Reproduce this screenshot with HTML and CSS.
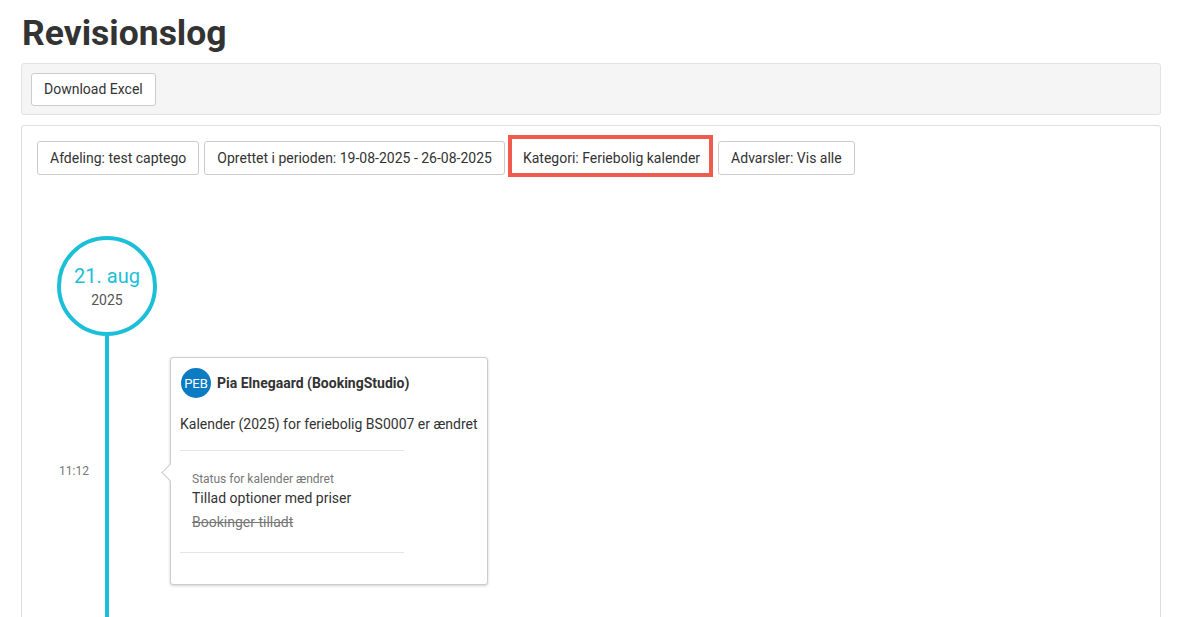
FILE: index.html
```html
<!DOCTYPE html>
<html lang="da">
  <head>
    <meta charset="UTF-8" />
    <meta name="viewport" content="width=device-width, initial-scale=1.0" />
    <title>Revisionslog</title>
    <link rel="stylesheet" href="styles.css">
  </head>

  <body>
    <div class="page">
      <h1>Revisionslog</h1>

      <div class="toolbar">
        <button class="btn">Download Excel</button>
      </div>

      <div class="panel">
        <div class="filters">
          <button class="btn">Afdeling: test captego</button>
          <button class="btn">Oprettet i perioden: 19-08-2025 - 26-08-2025</button>
          <button class="btn highlight">Kategori: Feriebolig kalender</button>
          <button class="btn">Advarsler: Vis alle</button>
        </div>

        <div class="timeline">
          <div class="day">
            <span class="day-date">21. aug</span>
            <span class="day-year">2025</span>
          </div>

          <div class="entry">
            <div class="entry-time">11:12</div>
            <div class="rail"></div>
            <div class="card">
              <div class="card-head">
                <span class="avatar">PEB</span>
                <span class="author">Pia Elnegaard (BookingStudio)</span>
              </div>
              <p class="message">Kalender (2025) for feriebolig BS0007 er ændret</p>
              <div class="change">
                <span class="change-label">Status for kalender ændret</span>
                <span class="change-new">Tillad optioner med priser</span>
                <span class="change-old">Bookinger tilladt</span>
              </div>
            </div>
          </div>
        </div>
      </div>
    </div>
  </body>
</html>
```

FILE: styles.css
```css
* {
  margin: 0;
  padding: 0;
  box-sizing: border-box;
}
:root {
  --text: #333;
  --muted: #777;
  --line: #e5e5e5;
  --accent: #1bbfd8;
  --avatar: #0b7bc4;
  --mark: #ef5b4f;
}
body {
  font-family: Roboto, "Liberation Sans", sans-serif;
  color: var(--text);
  background-color: #fff;
  height: 100vh;
  overflow: hidden;
}
.page {
  padding: 0 16px 0 21px;
}
h1 {
  font-size: 35.5px;
  line-height: 40px;
  font-weight: 700;
  margin: 13px 0 10px 1px;
}
.btn {
  font-family: inherit;
  font-size: 14px;
  line-height: 20px;
  color: var(--text);
  background-color: #fff;
  border: 1px solid #ccc;
  border-radius: 3px;
  padding: 6px 12px;
  cursor: pointer;
}
.toolbar {
  background-color: #f5f5f5;
  border: 1px solid #e3e3e3;
  border-radius: 3px;
  padding: 9px 9px 8px;
  display: flex;
}
.toolbar .btn {
  padding: 5px 12px 6px;
}
.panel {
  margin-top: 10px;
  border: 1px solid #ddd;
  border-radius: 3px;
  padding: 15px 15px 0;
  height: 600px;
}
.filters {
  display: flex;
  align-items: flex-start;
  gap: 5px;
}
.filters .highlight {
  border: 4px solid var(--mark);
  border-radius: 0;
  padding: 9px 9px 5px 11px;
  margin: -6px 0 -3px -2px;
}

/* tidslinje */
.timeline {
  margin-top: 61px;
  padding-left: 20px;
}
.day {
  width: 100px;
  height: 100px;
  border: 4px solid var(--accent);
  border-radius: 50%;
  display: flex;
  flex-direction: column;
  align-items: center;
  justify-content: center;
}
.day-date {
  color: var(--accent);
  font-size: 20px;
  line-height: 24px;
  margin-top: 1px;
}
.day-year {
  color: #555;
  font-size: 14px;
  line-height: 18px;
  margin-top: 3px;
}
.entry {
  display: grid;
  grid-template-columns: 48px 4px 61px 318px;
  padding-bottom: 40px;
}
.entry-time {
  font-size: 12px;
  line-height: 17px;
  color: var(--muted);
  text-align: right;
  padding-right: 16px;
  margin-top: 127px;
}
.rail {
  background-color: var(--accent);
  margin-bottom: -40px;
}
.card {
  grid-column: 4;
  margin-top: 21px;
  position: relative;
  background-color: #fff;
  border: 1px solid #ccc;
  border-radius: 3px;
  box-shadow: 0 1px 3px rgba(0, 0, 0, 0.18);
  padding: 10px 9px 31px;
}
.card::before {
  content: "";
  position: absolute;
  left: -7px;
  top: 108px;
  width: 12px;
  height: 12px;
  background-color: #fff;
  border-left: 1px solid #ccc;
  border-bottom: 1px solid #ccc;
  transform: rotate(45deg);
}
.card-head {
  display: flex;
  align-items: center;
  gap: 6px;
  padding-left: 1px;
}
.avatar {
  width: 30px;
  height: 30px;
  border-radius: 50%;
  background-color: var(--avatar);
  color: #fff;
  font-size: 13px;
  display: flex;
  align-items: center;
  justify-content: center;
}
.author {
  font-size: 14px;
  font-weight: 700;
}
.message {
  font-size: 14px;
  line-height: 20px;
  margin-top: 16px;
  padding-bottom: 16px;
  border-bottom: 1px solid var(--line);
  width: 224px;
  white-space: nowrap;
}
.change {
  width: 224px;
  padding: 20px 12px 20px;
  border-bottom: 1px solid var(--line);
  display: flex;
  flex-direction: column;
}
.change-label {
  font-size: 12px;
  line-height: 16px;
  color: var(--muted);
}
.change-new {
  font-size: 14px;
  line-height: 20px;
  margin-top: 1px;
}
.change-old {
  font-size: 14px;
  line-height: 20px;
  color: var(--muted);
  text-decoration: line-through;
  margin-top: 4px;
}
```
